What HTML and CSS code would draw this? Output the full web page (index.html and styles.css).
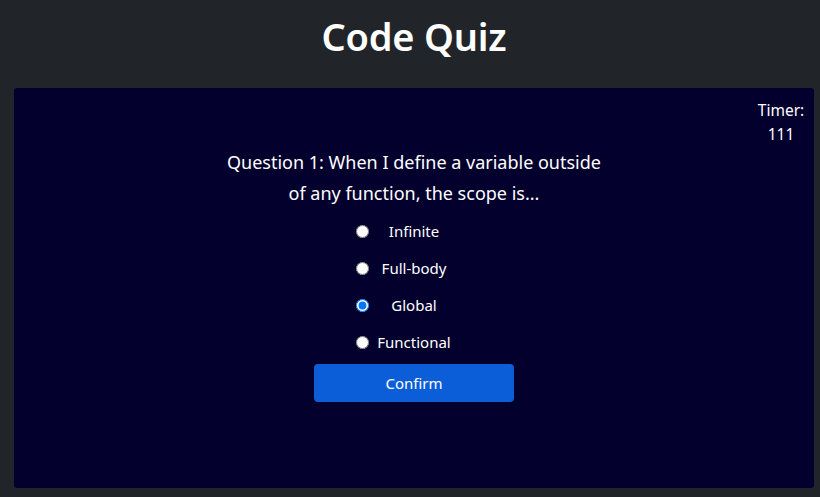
FILE: index.html
```html
<!DOCTYPE html>
<html lang="en">
<head>
<meta charset="utf-8">
<title>Code Quiz</title>
<link rel="stylesheet" href="styles.css">
</head>
<body>
<div class="page">
  <h1 class="title">Code Quiz</h1>
  <main class="card">
    <div class="timer-row">
      <div class="timer">Timer:<br>111</div>
    </div>
    <p class="question">Question 1: When I define a variable outside<br>of any function, the scope is...</p>
    <form class="options">
      <label class="option"><span class="radio-cell"><input type="radio" name="q1"></span><span class="label">Infinite</span><span></span></label>
      <label class="option"><span class="radio-cell"><input type="radio" name="q1"></span><span class="label">Full-body</span><span></span></label>
      <label class="option"><span class="radio-cell"><input type="radio" name="q1" checked></span><span class="label">Global</span><span></span></label>
      <label class="option"><span class="radio-cell"><input type="radio" name="q1"></span><span class="label">Functional</span><span></span></label>
      <div class="actions"><button type="button" class="btn">Confirm</button></div>
    </form>
  </main>
</div>
</body>
</html>
```

FILE: styles.css
```css
* { box-sizing: border-box; }
html, body { margin: 0; padding: 0; }
body {
  background: #212529;
  color: #ffffff;
  font-family: "Noto Sans", "Open Sans", sans-serif;
  font-size: 15px;
  line-height: 24px;
  height: 497px;
  overflow: hidden;
}
.page {
  margin: 0 6px 0 14px;
  display: flex;
  flex-direction: column;
}
.title {
  margin: 12px 0 28px;
  text-align: center;
  font-size: 38px;
  line-height: 48px;
  font-weight: 600;
  letter-spacing: -0.2px;
}
.card {
  background: #03002e;
  border-radius: 3px;
  height: 400px;
  padding: 10px 7px 0 10px;
}
.timer-row {
  display: flex;
  justify-content: flex-end;
}
.timer {
  text-align: center;
  width: 52px;
  font-size: 15.5px;
}
.question {
  margin: 1px 3px 0 0;
  text-align: center;
  font-size: 18px;
  line-height: 31px;
}
.options {
  display: flex;
  flex-direction: column;
  margin: 10px 3px 0 0;
}
.option {
  display: grid;
  grid-template-columns: 1fr 84px 1fr;
  align-items: center;
  height: 24px;
  margin-bottom: 13px;
}
.radio-cell {
  display: flex;
  justify-content: flex-end;
  padding-right: 3px;
}
.radio-cell input {
  margin: 0;
  width: 13px;
  height: 13px;
}
.label { text-align: center; }
.actions {
  display: flex;
  justify-content: center;
  margin-top: -3px;
}
.btn {
  width: 200px;
  height: 38px;
  background: #0b5ed7;
  color: #ffffff;
  border: none;
  border-radius: 4px;
  font-family: inherit;
  font-size: 15px;
}
```
